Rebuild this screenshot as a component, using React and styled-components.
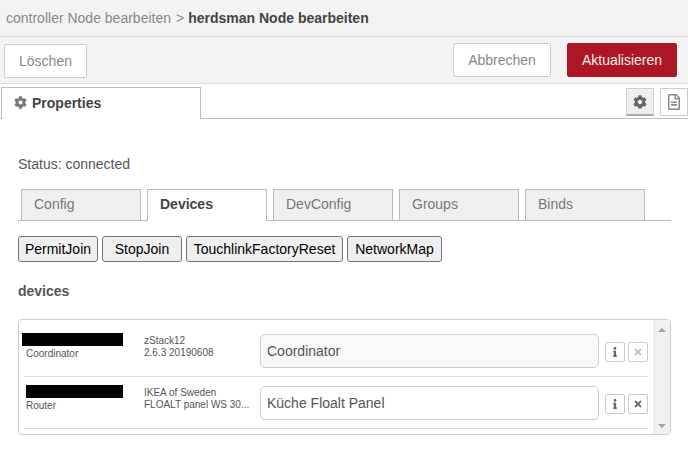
import React from "react";
import styled, { createGlobalStyle } from "styled-components";
import { FaCog, FaRegFileAlt, FaInfo, FaTimes } from "react-icons/fa";

const Global = createGlobalStyle`
  html, body { margin: 0; padding: 0; background: #fff; }
  body { font-family: "Liberation Sans", Arial, sans-serif; font-size: 14px; color: #555; }
  * { box-sizing: border-box; }
`;

const Page = styled.div`
  width: 688px;
  height: 458px;
  overflow: hidden;
  display: flex;
  flex-direction: column;
`;

const Breadcrumb = styled.div`
  height: 37px;
  background: #f3f3f3;
  border-bottom: 1px solid #ddd;
  padding: 0 6px 1px;
  display: flex;
  align-items: center;
  color: #888;
  white-space: pre;
`;
const Separator = styled.span`
  margin: 0 4px 0 5px;
`;
const Strong = styled.b`
  color: #444;
`;

const Toolbar = styled.div`
  height: 47px;
  background: #f3f3f3;
  border-bottom: 1px solid #ddd;
  padding: 6px 11px 0 4px;
  display: flex;
  align-items: flex-start;
`;
const ActionButton = styled.button`
  height: 34px;
  width: ${(p) => p.$w}px;
  margin-top: ${(p) => p.$top || 0}px;
  margin-left: ${(p) => p.$ml || 0}px;
  border: 1px solid ${(p) => (p.$primary ? "#ad1625" : "#ccc")};
  border-radius: 2px;
  background: ${(p) => (p.$primary ? "#ad1625" : "#fff")};
  color: ${(p) => (p.$primary ? "#eee" : "#888")};
  font: 14px "Liberation Sans", Arial, sans-serif;
  padding: 0;
`;
const Spacer = styled.div`
  flex: 1;
`;

const TabBar = styled.div`
  height: 35px;
  border-bottom: 1px solid #bbb;
  padding: 3px 0 0 1px;
  display: flex;
  align-items: flex-start;
`;
const MainTab = styled.div`
  width: 200px;
  height: 32px;
  border: 1px solid #bbb;
  border-bottom: 0;
  background: #fff;
  padding: 0 0 2px 12px;
  display: flex;
  align-items: center;
  gap: 5px;
  font-weight: bold;
  color: #444;
  svg { color: #777; font-size: 13px; }
`;
const IconTab = styled.div`
  width: 28px;
  height: 28px;
  margin-top: 1px;
  margin-left: ${(p) => p.$ml}px;
  display: flex;
  align-items: center;
  justify-content: center;
  font-size: ${(p) => p.$size}px;
  color: ${(p) => (p.$active ? "#666" : "#888")};
  background: ${(p) => (p.$active ? "#efefef" : "#fff")};
  border: 1px solid #ccc;
  border-bottom: ${(p) => (p.$active ? "2px solid #aaa" : "1px solid #ccc")};
`;

const Content = styled.div`
  padding: 37px 17px 0 18px;
  display: flex;
  flex-direction: column;
`;
const Status = styled.div`
  height: 16px;
  line-height: 16px;
`;
const SubTabs = styled.div`
  margin-top: 17px;
  height: 32px;
  border-bottom: 1px solid #bbb;
  padding-left: 3px;
  display: flex;
  gap: 6px;
`;
const SubTab = styled.div`
  width: 120px;
  height: ${(p) => (p.$active ? 32 : 31)}px;
  border: 1px solid #bbb;
  border-bottom: ${(p) => (p.$active ? "0" : "none")};
  background: ${(p) => (p.$active ? "#fff" : "#efefef")};
  color: ${(p) => (p.$active ? "#444" : "#777")};
  font-weight: ${(p) => (p.$active ? "bold" : "normal")};
  padding-left: 12px;
  line-height: 29px;
  position: relative;
  z-index: 1;
`;
const ButtonRow = styled.div`
  margin-top: 15px;
  display: flex;
  gap: 4px;
`;
const PlainButton = styled.button`
  height: 26px;
  width: ${(p) => p.$w}px;
  padding: 0;
  border: 1px solid #767676;
  border-radius: 3px;
  background: #efefef;
  color: #000;
  font: 14px "Liberation Sans", Arial, sans-serif;
`;
const SectionTitle = styled.div`
  margin-top: 21px;
  height: 16px;
  line-height: 16px;
  font-weight: bold;
  color: #555;
`;
const ListPanel = styled.div`
  margin-top: 20px;
  height: 116px;
  border: 1px solid #ccc;
  border-radius: 4px;
  display: flex;
  overflow: hidden;
`;
const Rows = styled.div`
  flex: 1;
  padding: 5px 5px 0 5px;
`;
const Row = styled.div`
  height: 52px;
  border-bottom: 1px solid #ddd;
  display: flex;
  align-items: flex-start;
`;
const IdColumn = styled.div`
  width: 120px;
  padding: 8px 0 0 2px;
  font-size: 10px;
  line-height: 13px;
  color: #555;
`;
const Redacted = styled.div`
  height: 13px;
  width: ${(p) => p.$w}px;
  margin-left: ${(p) => p.$ml}px;
  margin-bottom: 1px;
  background: #000;
`;
const ModelColumn = styled.div`
  width: 116px;
  padding-top: 10px;
  font-size: 10px;
  line-height: 12px;
  color: #555;
  white-space: nowrap;
`;
const NameInput = styled.input`
  width: 339px;
  height: 34px;
  margin-top: 9px;
  padding: 0 6px;
  border: 1px solid #ccc;
  border-radius: 5px;
  background: ${(p) => (p.readOnly ? "#f8f8f8" : "#fff")};
  color: #555;
  font: 14px "Liberation Sans", Arial, sans-serif;
`;
const RowActions = styled.div`
  margin: 17px 0 0 6px;
  display: flex;
  gap: 3px;
`;
const SmallButton = styled.div`
  width: 20px;
  height: 20px;
  border: 1px solid #ccc;
  border-radius: 2px;
  background: #fff;
  display: flex;
  align-items: center;
  justify-content: center;
  font-size: 10px;
  color: ${(p) => (p.$disabled ? "#bbb" : "#666")};
`;
const Scrollbar = styled.div`
  width: 17px;
  background: #f1f1f1;
  display: flex;
  flex-direction: column;
  justify-content: space-between;
  align-items: center;
  padding: 8px 0 6px;
`;
const Arrow = styled.div`
  width: 0;
  height: 0;
  border-left: 4px solid transparent;
  border-right: 4px solid transparent;
  ${(p) => (p.$up ? "border-bottom: 4px solid #a3a3a3;" : "border-top: 4px solid #a3a3a3;")}
`;

const subTabs = ["Config", "Devices", "DevConfig", "Groups", "Binds"];
const actions = [
  ["PermitJoin", 80],
  ["StopJoin", 80],
  ["TouchlinkFactoryReset", 157],
  ["NetworkMap", 95],
];
const devices = [
  { type: "Coordinator", w: 101, ml: -4, a: "zStack12", b: "2.6.3 20190608", name: "Coordinator", ro: true },
  { type: "Router", w: 97, ml: 0, a: "IKEA of Sweden", b: "FLOALT panel WS 30...", name: "Küche Floalt Panel" },
];

export default function App() {
  return (
    <Page>
      <Global />
      <Breadcrumb>
        controller Node bearbeiten<Separator>&gt;</Separator><Strong>herdsman Node bearbeiten</Strong>
      </Breadcrumb>
      <Toolbar>
        <ActionButton $w={83} $top={1}>Löschen</ActionButton>
        <Spacer />
        <ActionButton $w={98}>Abbrechen</ActionButton>
        <ActionButton $w={110} $ml={16} $primary>Aktualisieren</ActionButton>
      </Toolbar>
      <TabBar>
        <MainTab><FaCog />Properties</MainTab>
        <Spacer />
        <IconTab $active $ml={0} $size={14}><FaCog /></IconTab>
        <IconTab $ml={6} $size={16}><FaRegFileAlt /></IconTab>
      </TabBar>
      <Content>
        <Status>Status: connected</Status>
        <SubTabs>
          {subTabs.map((t) => (
            <SubTab key={t} $active={t === "Devices"}>{t}</SubTab>
          ))}
        </SubTabs>
        <ButtonRow>
          {actions.map(([t, w]) => (
            <PlainButton key={t} $w={w}>{t}</PlainButton>
          ))}
        </ButtonRow>
        <SectionTitle>devices</SectionTitle>
        <ListPanel>
          <Rows>
            {devices.map((d) => (
              <Row key={d.type}>
                <IdColumn>
                  <Redacted $w={d.w} $ml={d.ml} />
                  {d.type}
                </IdColumn>
                <ModelColumn>{d.a}<br />{d.b}</ModelColumn>
                <NameInput defaultValue={d.name} readOnly={d.ro} />
                <RowActions>
                  <SmallButton><FaInfo /></SmallButton>
                  <SmallButton $disabled={d.ro}><FaTimes /></SmallButton>
                </RowActions>
              </Row>
            ))}
          </Rows>
          <Scrollbar><Arrow $up /><Arrow /></Scrollbar>
        </ListPanel>
      </Content>
    </Page>
  );
}
